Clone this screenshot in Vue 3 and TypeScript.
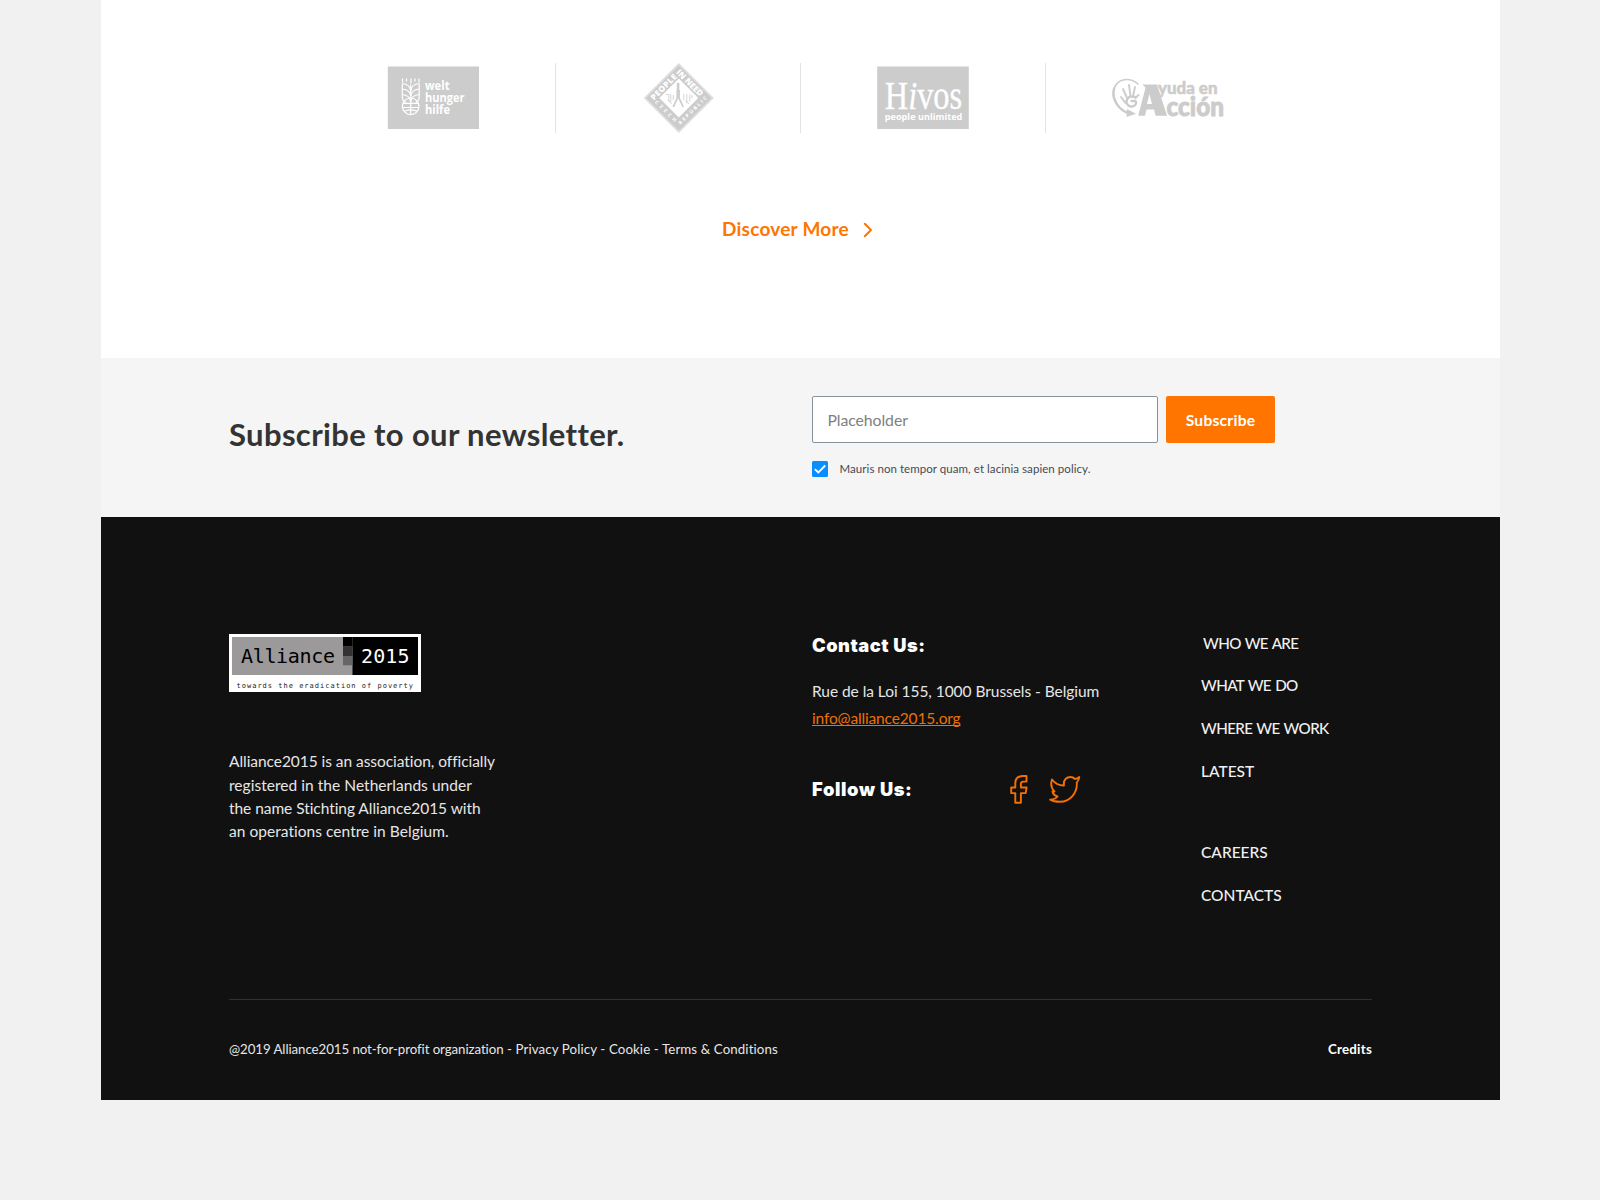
<script setup lang="ts">
import { ref } from 'vue'

interface NavLink {
  label: string
  tone: 'tight' | 'normal'
}

const primaryLinks: NavLink[] = [
  { label: 'WHO WE ARE', tone: 'tight' },
  { label: 'WHAT WE DO', tone: 'tight' },
  { label: 'WHERE WE WORK', tone: 'tight' },
  { label: 'LATEST', tone: 'normal' },
]
const secondaryLinks: NavLink[] = [
  { label: 'CAREERS', tone: 'normal' },
  { label: 'CONTACTS', tone: 'normal' },
]
const aboutLines = [
  'Alliance2015 is an association, officially',
  'registered in the Netherlands under',
  'the name Stichting Alliance2015 with',
  'an operations centre in Belgium.',
]
const email = ref('')
const accepted = ref(true)
</script>

<template>
  <div class="page">
    <section class="partners">
      <div class="logos">
        <div class="logo">
          <svg width="244" height="70" viewBox="311 63 244 70">
            <rect x="387.8" y="66.5" width="91.2" height="62.5" fill="#ccc" />
            <g fill="none" stroke="#fff" stroke-width="1.2">
              <path d="M402.500 78.500v4M406.500 78.500v3M411 78.500v5M415 78.500v3M419 78.500v4" />
              <path d="M410.700 84.500V114M402.300 84v13c0 3 1.500 4.500 3.500 5.500M419.200 84v13c0 3-1.500 4.500-3.500 5.500" />
              <path d="M402.300 83.500c5 .5 8 3 8.400 7.500c.4-4.500 3.400-7 8.500-7.500M402.300 89c5 .5 8 3 8.400 7.500c.4-4.500 3.400-7 8.500-7.500M402.300 94.500c5 .5 8 3 8.400 7.500c.4-4.500 3.400-7 8.500-7.500" />
              <circle cx="410.700" cy="106.300" r="8.300" />
              <path d="M403 103.300h15.500M402.500 107.500h16.500M404.500 111.200c4-1.800 8.500-1.800 12.500 0" />
            </g>
            <g class="welt">
              <text x="425" y="89.700" textLength="24.500" lengthAdjust="spacingAndGlyphs">welt</text>
              <text x="425" y="101.900" textLength="39.500" lengthAdjust="spacingAndGlyphs">hunger</text>
              <text x="425" y="114.100" textLength="25" lengthAdjust="spacingAndGlyphs">hilfe</text>
            </g>
          </svg>
        </div>
        <div class="logo">
          <svg width="244" height="70" viewBox="556 63 244 70">
            <g transform="translate(678.8 98)">
              <path d="M0-35L35 0L0 35L-35 0Z" fill="#dedede" />
              <path d="M0-32.500L32.500 0L0 32.500L-32.500 0Z" fill="#ccc" />
              <path d="M0-19.500L19.500 0L0 19.500L-19.500 0Z" fill="#fff" />
              <g class="need">
                <text transform="rotate(-45)" x="-19.500" y="-15.600" textLength="33">PEOPLE</text>
                <text transform="rotate(45)" x="-20" y="-15.600" textLength="34">IN NEED</text>
              </g>
              <g class="czech">
                <text transform="rotate(45)" x="-14" y="20.300" textLength="28">CZECH</text>
                <text transform="rotate(-45)" x="-18" y="20.300" textLength="38">REPUBLIC</text>
              </g>
              <g fill="none" stroke="#ccc">
                <path d="M-.7-15v8" stroke-width="2.600" />
                <path d="M-1.500-8v8l-4 9M.3-8v8l4 9" stroke-width="1.700" />
                <path d="M-13-3.500h3v7M-8-4v8M-5.500-3v5M5-4v6M8-4v9M11-3.500v7M13-3v3M-11 2l4 4M6.500 3l4 3" stroke-width=".8" />
              </g>
            </g>
          </svg>
        </div>
        <div class="logo">
          <svg width="244" height="70" viewBox="801 63 244 70">
            <rect x="877.200" y="66.500" width="91.600" height="62.500" fill="#ccc" />
            <text class="hivos" x="884.800" y="108.700" textLength="77.300" lengthAdjust="spacingAndGlyphs">H<tspan font-style="italic">i</tspan>vos</text>
            <text class="people" x="884.800" y="119.700" textLength="77.500" lengthAdjust="spacingAndGlyphs">people unlimited</text>
          </svg>
        </div>
        <div class="logo">
          <svg width="244" height="70" viewBox="1045.500 62.500 244 70">
            <g fill="none" stroke="#ccc" stroke-linecap="round">
              <path d="M1137.500 83.500C1131 77.500 1120 77 1115 85C1110 93.500 1114.500 107 1127 112.500" stroke-width="1.700" />
              <path d="M1113.600 88C1111 97 1116 107.500 1127 112.500" stroke-width="2.400" />
              <path d="M1120.500 96.500l4.500 6M1122.500 88.500l4.500 10M1128.500 84.500l1.500 11M1134.500 86.500l-2 9.500M1138 94.500l-3 3" stroke-width="1.900" />
              <path d="M1134.500 96.500c-4.500-1.500-8 .5-8.500 4c-.3 3.800 3 6.300 6.500 5.300c2.800-1 3.800-3.600 2.500-5.300h-4" stroke-width="2.400" />
            </g>
            <path d="M1126.500 108.500l9 4.800-9.500 3.300z" fill="#ccc" />
            <path d="M1142 84h14.500l10 31.300h-11.300l-1.800-6.300h-7.300l-1.700 6.300h-6.700l7.300-28zM1146.500 103.500h5l-2.600-10z" fill="#ccc" fill-rule="evenodd" />
            <g class="ayuda">
              <text class="yuda" x="1157.500" y="93.800" textLength="59.500" lengthAdjust="spacingAndGlyphs">yuda en</text>
              <text class="ccion" x="1166" y="115.200" textLength="57.500" lengthAdjust="spacingAndGlyphs">cción</text>
            </g>
          </svg>
        </div>
      </div>
      <a class="discover">
        <span>Discover More</span>
        <svg width="10" height="16" viewBox="0 0 10 16"><path d="M1.800 1.800L8 8L1.800 14.200" fill="none" stroke="#ff7500" stroke-width="2" stroke-linecap="round" /></svg>
      </a>
    </section>

    <section class="newsletter">
      <h2>Subscribe to our newsletter.</h2>
      <form @submit.prevent>
        <div class="fields">
          <input v-model="email" type="text" placeholder="Placeholder" />
          <button type="submit">Subscribe</button>
        </div>
        <div class="policy" @click="accepted = !accepted">
          <span class="box">
            <svg v-if="accepted" width="16" height="16" viewBox="0 0 16 16"><path d="M2.800 8.200L6.300 11.500L13.200 4.500" fill="none" stroke="#fff" stroke-width="1.800" /></svg>
          </span>
          <span class="policy-text">Mauris non tempor quam, et lacinia sapien policy.</span>
        </div>
      </form>
    </section>

    <footer>
      <div class="columns">
        <div class="about">
          <svg class="brand" width="192" height="58.500" viewBox="0 0 192 58.500">
            <rect width="192" height="58.500" fill="#fff" />
            <rect x="3" y="3" width="121" height="38" fill="#9b9999" />
            <rect x="123.500" y="3" width="65.500" height="38" fill="#000" />
            <rect x="114" y="3" width="9.500" height="9.500" fill="#000" />
            <rect x="114" y="12.300" width="9.500" height="9.700" fill="#333" />
            <rect x="114" y="22" width="9.500" height="9.300" fill="#666" />
            <g class="wordmark">
              <text x="12" y="29.200" textLength="94">Alliance</text>
              <text x="132" y="29.200" textLength="48.500" fill="#fff">2015</text>
              <text class="tagline" x="7.500" y="53.600" textLength="176.500">towards the eradication of poverty</text>
            </g>
          </svg>
          <p><span v-for="line in aboutLines" :key="line">{{ line }}</span></p>
        </div>
        <div class="contact">
          <h3>Contact Us:</h3>
          <address>
            <span>Rue de la Loi 155, 1000 Brussels - Belgium</span>
            <a>info@alliance2015.org</a>
          </address>
          <div class="follow">
            <h3>Follow Us:</h3>
            <div class="social">
              <svg width="18" height="29" viewBox="0 0 18 29"><path d="M16.500 1H13C8 1 5.300 3.500 5.300 8.200v4.300H1.200v5.600h4.100V27.800h5.600V18.100h4.800l.9-5.600h-5.700V9.200c0-1.700.8-2.600 2.500-2.600h3.100z" /></svg>
              <svg width="32" height="29" viewBox="0 0 32 29"><path d="M3 4.500C6 8.500 10 10.600 15 10.500C14 4.500 18 2 21.500 2C24 2 25 3 26 4C27.800 3.700 29 3 30.300 2C30 4.500 28.800 6.300 27.800 7.500C28.500 18 21 26.800 11 26.800C7 26.800 3.500 26 1.200 24.600C4 24.600 7 23.500 8.500 21.500C5.500 20.500 3.800 18.500 3.500 16.500H5.500C2.500 13.500 1.500 9 3 4.500Z" /></svg>
            </div>
          </div>
        </div>
        <nav>
          <a v-for="link in primaryLinks" :key="link.label" :class="link.tone">{{ link.label }}</a>
          <div class="secondary">
            <a v-for="link in secondaryLinks" :key="link.label" :class="link.tone">{{ link.label }}</a>
          </div>
        </nav>
      </div>
      <div class="legal">
        <div>
          <span class="owner">@2019 Alliance2015 not-for-profit organization</span>
          <span class="terms"> - Privacy Policy - Cookie - Terms &amp; Conditions</span>
        </div>
        <strong>Credits</strong>
      </div>
    </footer>
  </div>
</template>

<style>
body { background: #f1f1f1; }
</style>

<style scoped>
* { box-sizing: border-box; }
.page {
  width: 1399px;
  margin-left: 101px;
  font-family: Lato, sans-serif;
  font-variant-ligatures: none;
}
h2, h3, p { margin: 0; }

.partners { height: 358px; padding-top: 62.500px; background: #fff; }
.logos { display: flex; padding-left: 209.500px; }
.logo { width: 245px; height: 70px; border-right: 1px solid #e4e4e4; }
.logo:last-child { border-right: 0; }
.logo svg { display: block; }
.welt { font: 700 11.800px "Open Sans", sans-serif; fill: #fff; }
.need { font: 800 8.200px "Open Sans", sans-serif; fill: #fff; }
.czech { font: 700 5px "Open Sans", sans-serif; fill: #fff; }
.hivos { font: 400 40px "Liberation Serif", serif; fill: #fff; stroke: #fff; stroke-width: .3px; }
.people { font: 700 9.400px "Open Sans", sans-serif; fill: #fff; }
.ayuda { fill: #ccc; stroke: #ccc; }
.yuda { font: 900 17px Lato, sans-serif; stroke-width: .5px; }
.ccion { font: 900 27px Lato, sans-serif; stroke-width: .9px; }

.discover {
  display: flex;
  align-items: center;
  margin: 84px 0 0 621px;
  font-weight: 700;
  font-size: 19px;
  line-height: 24px;
  letter-spacing: .24px;
  color: #ff7500;
}
.discover svg { margin: 2px 0 0 14.300px; }

.newsletter { display: flex; height: 159px; padding-left: 128px; background: #f5f5f5; }
.newsletter h2 {
  width: 583px;
  padding-top: 56px;
  font-weight: 700;
  font-size: 31px;
  line-height: 40px;
  letter-spacing: .36px;
  color: #333;
}
form { padding-top: 38.500px; }
.fields { display: flex; gap: 8px; margin-top: -.3px; }
input {
  width: 346px;
  height: 47px;
  padding: 0 14.500px 1px;
  border: 1px solid #87919a;
  border-radius: 2px;
  background: #fff;
  font: 400 15.800px Lato, sans-serif;
  letter-spacing: -.08px;
  outline: 0;
}
input::placeholder { color: #808080; opacity: 1; }
button {
  width: 109px;
  height: 47px;
  padding: 0;
  border: 0;
  border-radius: 2px;
  background: #ff7500;
  color: #fff;
  font: 700 15.600px Lato, sans-serif;
  letter-spacing: .25px;
}
.policy { display: flex; align-items: flex-start; gap: 11.500px; margin-top: 17.300px; }
.box { display: block; width: 16px; height: 16px; border-radius: 1.500px; background: #0a8dff; }
.box svg { display: block; }
.policy-text { font-size: 11.500px; line-height: 16px; letter-spacing: .06px; color: #434b54; }

footer { height: 583px; padding: 114.500px 128px 0; background: #111; color: #e6e6e6; }
.columns { display: grid; grid-template-columns: 583px 389px 1fr; height: 367.500px; font-size: 15.500px; }
.about { padding-top: 2px; }
.brand { display: block; }
.wordmark { font: 400 20px "DejaVu Sans Mono", monospace; }
.tagline { font-size: 7px; fill: #222; }
.about p { margin-top: 58.400px; line-height: 23px; letter-spacing: -.05px; }
.about span { display: block; height: 23.300px; }
.about span:nth-child(even) { letter-spacing: .04px; }
.contact { padding-top: 1.500px; }
h3 {
  font: 900 18.300px/24px Inter, sans-serif;
  letter-spacing: .5px;
  color: #fff;
}
address {
  display: flex;
  flex-direction: column;
  align-items: flex-start;
  margin-top: 21px;
  font-style: normal;
  line-height: 27.400px;
  letter-spacing: -.05px;
}
address a {
  color: #ee7005;
  letter-spacing: -.15px;
  text-decoration: underline;
  text-decoration-thickness: 1px;
  text-underline-offset: 1px;
  text-decoration-skip-ink: none;
}
.follow { display: flex; align-items: center; margin-top: 42px; }
.follow h3 { width: 198px; letter-spacing: .63px; }
.social { display: flex; gap: 20.500px; }
.social svg { display: block; fill: none; stroke: #f37005; stroke-width: 1.900px; stroke-linejoin: round; }
nav { display: flex; flex-direction: column; gap: 20.800px; color: #f0f0f0; font-weight: 500; line-height: 22px; }
nav a { display: block; }
nav > a:first-child { padding-left: 2px; }
nav .tight { font-size: 15.200px; letter-spacing: -.64px; word-spacing: 1px; }
nav .normal { letter-spacing: 0; }
.secondary { display: flex; flex-direction: column; gap: 20.800px; margin-top: 38.800px; }
.legal {
  display: flex;
  justify-content: space-between;
  padding-top: 39px;
  border-top: 1px solid #303030;
  font-size: 13.300px;
  line-height: 20px;
}
.owner { letter-spacing: -.08px; }
.terms { letter-spacing: .1px; }
.legal strong { color: #fff; font-size: 13.300px; letter-spacing: .25px; }
</style>
